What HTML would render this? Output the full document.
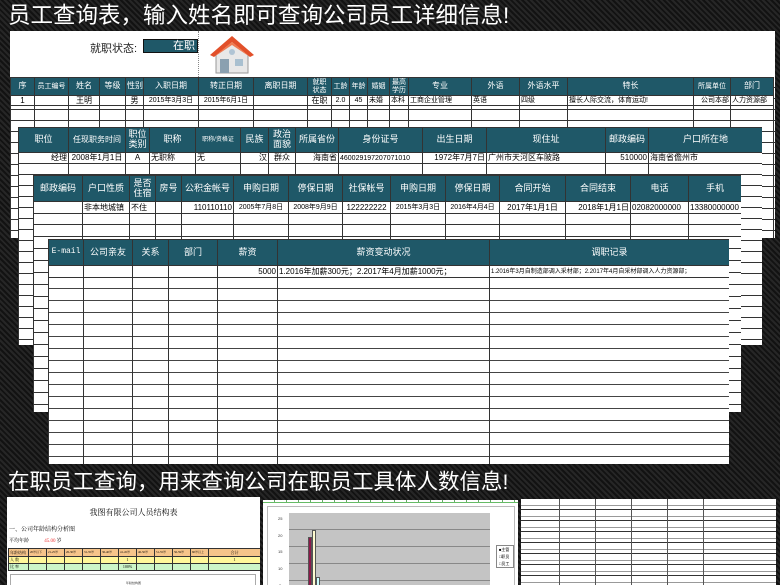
<!DOCTYPE html>
<html><head><meta charset="utf-8"><style>
*{margin:0;padding:0;box-sizing:border-box}
body{width:780px;height:585px;overflow:hidden;position:relative;font-family:"Liberation Sans","Noto Sans CJK SC",sans-serif;
background-color:#1b1b1b;background-image:repeating-linear-gradient(45deg,#262626 0 2px,#121212 2px 4px);}
.abs{position:absolute}
.t1{color:#fff;font-size:22.5px;letter-spacing:0px;white-space:nowrap;line-height:1}
.sheet{position:absolute;background-color:#fff;overflow:hidden}
table{border-collapse:collapse;table-layout:fixed;position:absolute;left:0;top:0}
td{border:1px solid #333;font-size:8px;white-space:nowrap;overflow:hidden;color:#000;padding:0 1px;line-height:1}
tr.h td{background:#1f5868;color:#fff;text-align:center;font-size:8px;line-height:1.1}
tr.h.big td{font-size:9px}
td.r{text-align:right}td.c{text-align:center}
tr.e td{background:transparent}
</style></head><body>

<div class="abs t1" style="left:8px;top:5px">员工查询表，输入姓名即可查询公司员工详细信息!</div>

<!-- sheet 1 -->
<div class="sheet" style="left:10px;top:31px;width:765px;height:207px;background-image:repeating-linear-gradient(#fff 0 10px,#333 10px 11px);background-position:0 2px">
 <div class="abs" style="left:0;top:0;width:765px;height:46px;background:#fff"></div>
 <div class="abs" style="left:80px;top:9px;font-size:11px;color:#222">就职状态:</div>
 <div class="abs" style="left:133px;top:8px;width:55px;height:14px;background:#1f5868;border:1px solid #111;color:#fff;font-size:11px;text-align:right;padding-right:2px;line-height:12px">在职</div>
 <div class="abs" style="left:188px;top:0;height:46px;border-left:1px dotted #888"></div>
 <svg class="abs" style="left:196px;top:2px" width="52" height="44" viewBox="0 0 52 44">
  <polygon points="10,20 26,8 42,20 42,40 10,40" fill="#e8e8e8" stroke="#999"/>
  <polygon points="4,22 26,3 48,22 44,24 26,9 8,24" fill="#e2502a"/>
  <polygon points="8,24 26,9 44,24 26,12" fill="#f07a50"/>
  <rect x="14" y="26" width="9" height="14" fill="#8aa0b0"/>
  <rect x="29" y="26" width="8" height="7" fill="#a9c0d0"/>
  <circle cx="26" cy="19" r="3" fill="#b0c4d4"/>
 </svg>
 <table style="top:46px;width:763px">
  <colgroup><col style="width:24px"><col style="width:34px"><col style="width:31px"><col style="width:26px"><col style="width:18px"><col style="width:55px"><col style="width:55px"><col style="width:54px"><col style="width:24px"><col style="width:18px"><col style="width:18px"><col style="width:22px"><col style="width:19px"><col style="width:63px"><col style="width:48px"><col style="width:48px"><col style="width:126px"><col style="width:37px"><col style="width:43px"></colgroup>
  <tr class="h" style="height:18px"><td>序</td><td style="font-size:7px">员工编号</td><td>姓名</td><td>等级</td><td>性别</td><td>入职日期</td><td>转正日期</td><td>离职日期</td><td style="font-size:7px">就职<br>状态</td><td style="font-size:7px">工龄</td><td style="font-size:7px">年龄</td><td style="font-size:7px">婚姻</td><td style="font-size:7px">最高<br>学历</td><td>专业</td><td>外语</td><td>外语水平</td><td>特长</td><td style="font-size:7px">所属单位</td><td>部门</td></tr>
  <tr style="height:10px;background:#fff"><td class="c">1</td><td></td><td class="c">王明</td><td></td><td class="c">男</td><td class="c" style="font-size:7px">2015年3月3日</td><td class="c" style="font-size:7px">2015年6月1日</td><td></td><td class="c">在职</td><td class="c" style="font-size:7px">2.0</td><td class="c" style="font-size:7px">45</td><td style="font-size:7px">未婚</td><td style="font-size:7px">本科</td><td style="font-size:7px">工商企业管理</td><td style="font-size:7px">英语</td><td style="font-size:7px">四级</td><td style="font-size:7px">擅长人际交流，体育运动!</td><td class="r" style="font-size:7px">公司本部</td><td style="font-size:7px">人力资源部</td></tr>
  <tr class="e" style="height:160px"><td></td><td></td><td></td><td></td><td></td><td></td><td></td><td></td><td></td><td></td><td></td><td></td><td></td><td></td><td></td><td></td><td></td><td></td><td></td></tr>
 </table>
</div>

<!-- sheet 2 -->
<div class="sheet" style="left:18px;top:127px;width:744px;height:218px;background-image:repeating-linear-gradient(#fff 0 10px,#333 10px 11px);background-position:0 4px">
 <table style="width:744px">
  <colgroup><col style="width:50px"><col style="width:57px"><col style="width:24px"><col style="width:46px"><col style="width:45px"><col style="width:28px"><col style="width:27px"><col style="width:43px"><col style="width:84px"><col style="width:64px"><col style="width:119px"><col style="width:43px"><col style="width:114px"></colgroup>
  <tr class="h big" style="height:25px"><td>职位</td><td style="font-size:8px">任现职务时间</td><td>职位<br>类别</td><td>职称</td><td style="font-size:6px">职称/资格证</td><td>民族</td><td>政治<br>面貌</td><td>所属省份</td><td>身份证号</td><td>出生日期</td><td>现住址</td><td>邮政编码</td><td>户口所在地</td></tr>
  <tr style="height:11px;background:#fff"><td class="r">经理</td><td class="c">2008年1月1日</td><td class="c">A</td><td>无职称</td><td>无</td><td class="r">汉</td><td class="c">群众</td><td class="r">海南省</td><td style="font-size:7px">460029197207071010</td><td class="r">1972年7月7日</td><td>广州市天河区车陂路</td><td class="r">510000</td><td>海南省儋州市</td></tr>
  <tr class="e" style="height:190px"><td></td><td></td><td></td><td></td><td></td><td></td><td></td><td></td><td></td><td></td><td></td><td></td><td></td></tr>
 </table>
</div>

<!-- sheet 3 -->
<div class="sheet" style="left:33px;top:175px;width:708px;height:237px;background-image:repeating-linear-gradient(#fff 0 11px,#333 11px 12px);background-position:0 2px">
 <table style="width:708px">
  <colgroup><col style="width:49px"><col style="width:47px"><col style="width:26px"><col style="width:26px"><col style="width:52px"><col style="width:55px"><col style="width:54px"><col style="width:48px"><col style="width:55px"><col style="width:54px"><col style="width:66px"><col style="width:65px"><col style="width:58px"><col style="width:53px"></colgroup>
  <tr class="h big" style="height:26px"><td>邮政编码</td><td>户口性质</td><td>是否<br>住宿</td><td>房号</td><td>公积金帐号</td><td>申购日期</td><td>停保日期</td><td>社保帐号</td><td>申购日期</td><td>停保日期</td><td>合同开始</td><td>合同结束</td><td>电话</td><td>手机</td></tr>
  <tr style="height:12px;background:#fff"><td></td><td>非本地城镇</td><td>不住</td><td></td><td class="r">110110110</td><td class="c" style="font-size:7px">2005年7月8日</td><td class="c" style="font-size:7px">2008年9月9日</td><td class="c">122222222</td><td class="c" style="font-size:7px">2015年3月3日</td><td class="c" style="font-size:7px">2016年4月4日</td><td class="c">2017年1月1日</td><td class="r">2018年1月1日</td><td>02082000000</td><td>13380000000</td></tr>
  <tr class="e" style="height:200px"><td></td><td></td><td></td><td></td><td></td><td></td><td></td><td></td><td></td><td></td><td></td><td></td><td></td><td></td></tr>
 </table>
</div>

<!-- sheet 4 -->
<div class="sheet" style="left:48px;top:239px;width:681px;height:225px;background-image:repeating-linear-gradient(#fff 0 11px,#444 11px 12px);background-position:0 2px">
 <table style="width:681px">
  <colgroup><col style="width:35px"><col style="width:49px"><col style="width:36px"><col style="width:49px"><col style="width:60px"><col style="width:212px"><col style="width:240px"></colgroup>
  <tr class="h big" style="height:26px"><td style="font-family:'Liberation Mono',monospace;font-size:8px">E-mail</td><td>公司亲友</td><td>关系</td><td>部门</td><td>薪资</td><td>薪资变动状况</td><td>调职记录</td></tr>
  <tr style="height:12px;background:#fff"><td></td><td></td><td></td><td></td><td class="r">5000</td><td>1.2016年加薪300元；2.2017年4月加薪1000元；</td><td style="font-size:6px">1.2016年3月自制造部调入采材部；2.2017年4月自采材部调入人力资源部；</td></tr>
  <tr class="e" style="height:190px"><td></td><td></td><td></td><td></td><td></td><td></td><td></td></tr>
 </table>
</div>

<div class="abs t1" style="left:8px;top:472px;font-size:21.5px">在职员工查询，用来查询公司在职员工具体人数信息!</div>

<!-- bottom left -->
<div class="sheet" style="left:7px;top:497px;width:253px;height:88px;font-family:'Liberation Serif','Noto Serif CJK SC',serif">
 <div class="abs" style="left:0;top:10px;width:253px;text-align:center;font-size:8px">我图有限公司人员结构表</div>
 <div class="abs" style="left:2px;top:27px;font-size:6px">一、公司年龄结构分析图</div>
 <div class="abs" style="left:2px;top:40px;font-size:5px">平均年龄 <span style="color:#e33;margin-left:14px">45.00</span> 岁</div>
 <table style="left:1px;top:51px;width:252px">
  <colgroup><col style="width:20px"><col span="10" style="width:18px"><col style="width:52px"></colgroup>
  <tr style="height:8px;background:#f6c48a"><td style="font-size:4px">年龄结构</td><td style="font-size:3px">20岁以下</td><td style="font-size:3px">21-25岁</td><td style="font-size:3px">26-30岁</td><td style="font-size:3px">31-35岁</td><td style="font-size:3px">36-40岁</td><td style="font-size:3px">41-45岁</td><td style="font-size:3px">46-50岁</td><td style="font-size:3px">51-55岁</td><td style="font-size:3px">56-59岁</td><td style="font-size:3px">60岁以上</td><td class="c" style="font-size:4px">合计</td></tr>
  <tr style="height:7px;background:#fff79a"><td style="font-size:4px">人 数</td><td></td><td></td><td></td><td></td><td></td><td class="c" style="font-size:4px">1</td><td></td><td></td><td></td><td></td><td class="c" style="font-size:4px">1</td></tr>
  <tr style="height:7px;background:#ccf5c8"><td style="font-size:4px">比 率</td><td></td><td></td><td></td><td></td><td></td><td class="c" style="font-size:4px">100%</td><td></td><td></td><td></td><td></td><td></td></tr>
 </table>
 <div class="abs" style="left:3px;top:77px;width:246px;height:14px;border:1px solid #aaa"></div>
 <div class="abs" style="left:0;top:84px;width:253px;text-align:center;font-size:3px">年龄结构图</div>
</div>

<!-- bottom middle -->
<div class="sheet" style="left:263px;top:500px;width:255px;height:85px">
 <div class="abs" style="left:0;top:0;width:255px;height:3px;background:repeating-linear-gradient(90deg,#fff 0 11px,#6a6 11px 12px);border-bottom:1px solid #6b6"></div>
 <div class="abs" style="left:4px;top:6px;width:248px;height:80px;border:1px solid #bbb"></div>
 <div class="abs" style="left:26px;top:13px;width:201px;height:72px;background:#c4c4c4;background-image:repeating-linear-gradient(#c4c4c4 0 16px,#888 16px 17px)"></div>
 <div class="abs" style="left:15px;top:11px;font-size:4px;line-height:16.7px;color:#333">25<br>20<br>15<br>10<br>&nbsp;5</div>
 <div class="abs" style="left:45px;top:37px;width:4px;height:50px;background:#8c1a4a;border:1px solid #555"></div>
 <div class="abs" style="left:49px;top:30px;width:4px;height:57px;background:#fffbd0;border:1px solid #555"></div>
 <div class="abs" style="left:53px;top:77px;width:4px;height:10px;background:#cff;border:1px solid #555"></div>
 <div class="abs" style="left:233px;top:45px;width:18px;height:23px;border:1px solid #888;font-size:4px;line-height:7px;padding-left:2px">■主管<br>□职员<br>□员工</div>
</div>

<!-- bottom right -->
<div class="sheet" style="left:521px;top:499px;width:255px;height:86px;background-image:repeating-linear-gradient(#fff 0 6px,#999 6px 7px,#fff 7px 10px,#333 10px 11px)">
 <div class="abs" style="left:38px;top:0;height:86px;border-left:1px solid #555"></div>
 <div class="abs" style="left:74px;top:0;height:86px;border-left:1px solid #555"></div>
 <div class="abs" style="left:110px;top:0;height:86px;border-left:1px solid #555"></div>
 <div class="abs" style="left:146px;top:0;height:86px;border-left:1px solid #555"></div>
 <div class="abs" style="left:182px;top:0;height:86px;border-left:1px solid #555"></div>
</div>
</body></html>
